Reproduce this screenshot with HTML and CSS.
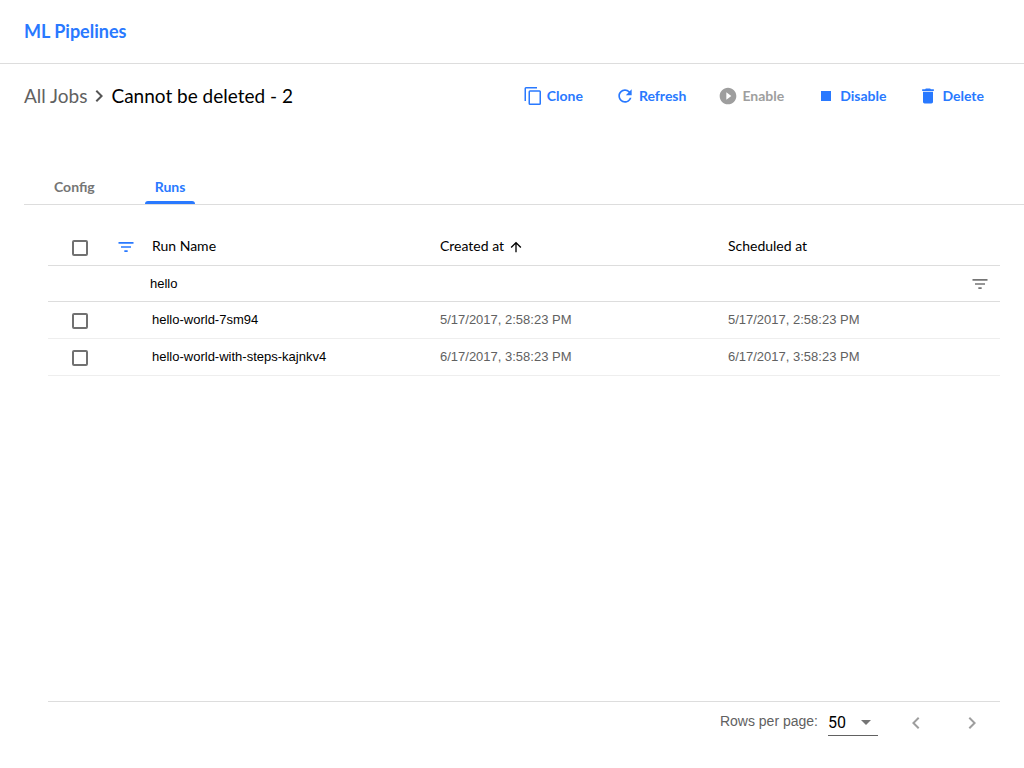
FILE: index.html
```html
<!DOCTYPE html>
<html lang="en">
<head>
<meta charset="utf-8">
<meta name="viewport" content="width=device-width, initial-scale=1">
<title>ML Pipelines</title>
<link rel="stylesheet" href="styles.css">
</head>
<body>
<header class="app-bar"><a class="brand" href="#">ML Pipelines</a></header>
<main class="page">
  <div class="toolbar">
    <nav class="breadcrumbs" aria-label="Breadcrumb">
      <a class="crumb-link" href="#">All Jobs</a>
      <svg class="icon crumb-icon" viewBox="0 0 24 24" aria-hidden="true"><path d="M10 6L8.59 7.41 13.17 12l-4.58 4.59L10 18l6-6z"/></svg>
      <h1 class="crumb-current">Cannot be deleted - 2</h1>
    </nav>
    <div class="actions">
      <button class="action" type="button">
        <svg class="icon" viewBox="0 0 20 20" aria-hidden="true"><path d="M14 1H3a1.5 1.5 0 0 0-1.500 1.500V15H3V2.500H14zM16.500 4.250H7A1.500 1.500 0 0 0 5.500 5.750V17.500A1.500 1.500 0 0 0 7 19h9.500A1.500 1.500 0 0 0 18 17.500V5.750a1.500 1.500 0 0 0-1.500-1.500zm0 13.250H7V5.750h9.500z"/></svg><span class="action-text">Clone</span></button>
      <button class="action" type="button">
        <svg class="icon" viewBox="0 0 24 24" aria-hidden="true"><path d="M17.650 6.350A7.958 7.958 0 0 0 12 4c-4.420 0-7.990 3.580-7.990 8s3.570 8 7.990 8c3.730 0 6.840-2.550 7.730-6h-2.080A5.990 5.990 0 0 1 12 18c-3.310 0-6-2.690-6-6s2.690-6 6-6c1.660 0 3.140.69 4.220 1.780L13 11h7V4z"/></svg><span class="action-text">Refresh</span></button>
      <button class="action" type="button" disabled>
        <svg class="icon" viewBox="0 0 24 24" aria-hidden="true"><path d="M12 2C6.480 2 2 6.480 2 12s4.480 10 10 10 10-4.480 10-10S17.520 2 12 2zm-2 14.500v-9l6 4.500z"/></svg><span class="action-text">Enable</span></button>
      <button class="action" type="button">
        <svg class="icon" viewBox="0 0 24 24" aria-hidden="true"><path d="M6 6h12v12H6z"/></svg><span class="action-text">Disable</span></button>
      <button class="action" type="button">
        <svg class="icon" viewBox="0 0 24 24" aria-hidden="true"><path d="M6 19c0 1.100.9 2 2 2h8c1.100 0 2-.9 2-2V7H6zM19 4h-3.500l-1-1h-5l-1 1H5v2h14z"/></svg><span class="action-text">Delete</span></button>
    </div>
  </div>
  <div class="tabs" role="tablist">
    <button class="tab" type="button" role="tab" aria-selected="false">Config</button>
    <button class="tab tab-active" type="button" role="tab" aria-selected="true">Runs</button>
  </div>
  <section class="runs">
    <table class="run-table">
      <colgroup><col class="col-check"><col class="col-filter"><col class="col-data"><col class="col-data"><col></colgroup>
      <thead>
        <tr>
          <td class="check-cell"><input class="checkbox" type="checkbox" aria-label="Select all runs"></td>
          <td><button class="filter-toggle" type="button" aria-label="Toggle filter"><svg class="icon" viewBox="0 0 24 24" aria-hidden="true"><path d="M10 18h4v-2h-4zM3 6v2h18V6zm3 7h12v-2H6z"/></svg></button></td>
          <th scope="col"><button class="sort" type="button">Run Name</button></th>
          <th scope="col" aria-sort="ascending"><button class="sort" type="button">Created at<svg class="icon sort-icon" viewBox="0 0 24 24" aria-hidden="true"><path d="M4 12l1.410 1.410L11 7.830V20h2V7.830l5.580 5.590L20 12l-8-8z"/></svg></button></th>
          <th scope="col"><button class="sort" type="button">Scheduled at</button></th>
        </tr>
        <tr class="filter-row">
          <td></td><td></td>
          <td colspan="3"><div class="filter-field"><input class="filter-input" type="text" value="hello" aria-label="Filter runs"><svg class="icon filter-icon" viewBox="0 0 24 24" aria-hidden="true"><path d="M10 18h4v-2h-4zM3 6v2h18V6zm3 7h12v-2H6z"/></svg></div></td>
        </tr>
      </thead>
      <tbody>
        <tr>
          <td class="check-cell"><input class="checkbox" type="checkbox" aria-label="Select hello-world-7sm94"></td><td></td>
          <td class="run-name">hello-world-7sm94</td><td>5/17/2017, 2:58:23 PM</td><td>5/17/2017, 2:58:23 PM</td>
        </tr>
        <tr>
          <td class="check-cell"><input class="checkbox" type="checkbox" aria-label="Select hello-world-with-steps-kajnkv4"></td><td></td>
          <td class="run-name">hello-world-with-steps-kajnkv4</td><td>6/17/2017, 3:58:23 PM</td><td>6/17/2017, 3:58:23 PM</td>
        </tr>
      </tbody>
    </table>
    <footer class="pager">
      <label class="pager-label" for="page-size">Rows per page:</label>
      <div class="select-wrap">
        <select class="page-size" id="page-size"><option>10</option><option>20</option><option selected>50</option><option>100</option></select>
        <svg class="icon select-icon" viewBox="0 0 24 24" aria-hidden="true"><path d="M7 10l5 5 5-5z"/></svg>
      </div>
      <button class="page-button" type="button" aria-label="Previous page" disabled><svg class="icon page-icon" viewBox="0 0 24 24" aria-hidden="true"><path d="M15.410 7.410L14 6l-6 6 6 6 1.410-1.410L10.830 12z"/></svg></button>
      <button class="page-button" type="button" aria-label="Next page" disabled><svg class="icon page-icon" viewBox="0 0 24 24" aria-hidden="true"><path d="M10 6L8.590 7.410 13.170 12l-4.580 4.590L10 18l6-6z"/></svg></button>
    </footer>
  </section>
</main>
</body>
</html>
```

FILE: styles.css
```css
* { box-sizing: border-box; }
body {
  margin: 0;
  min-height: 100vh;
  display: flex;
  flex-direction: column;
  background: #fff;
  color: #000;
  font-family: "Google Sans", Lato, sans-serif;
  font-size: 14px;
}
button, input, select { font: inherit; color: inherit; margin: 0; }
button { background: none; border: 0; padding: 0; }
.icon { display: block; flex: none; width: 20px; height: 20px; fill: currentColor; }

.app-bar {
  display: flex;
  align-items: center;
  height: 64px;
  padding: 0 24px 2px;
  border-bottom: 1px solid #ddd;
}
.brand { color: #2979ff; font-size: 18px; font-weight: 700; text-decoration: none; }

.page { flex: 1; display: flex; flex-direction: column; padding-left: 24px; }
.toolbar {
  display: flex;
  align-items: center;
  justify-content: space-between;
  height: 64px;
  padding-right: 40px;
}
.breadcrumbs { display: flex; align-items: center; font-size: 19px; white-space: nowrap; }
.crumb-link { padding-bottom: 2px; color: #616161; text-decoration: none; }
.crumb-icon { width: 24px; height: 24px; color: #555; }
.crumb-current { margin: 0; padding-bottom: 2px; font-size: 19px; font-weight: 400; }
.actions { display: flex; gap: 32px; }
.action { display: flex; align-items: center; gap: 4px; color: #2979ff; font-weight: 700; }
.action-text { padding-bottom: 2px; }
.action:disabled { color: #9e9e9e; }

.tabs { display: flex; gap: 40px; margin-top: 40px; padding-left: 20px; border-bottom: 1px solid #ddd; }
.tab { position: relative; height: 36px; padding: 0 10px; color: #757575; font-weight: 700; }
.tab-active { color: #2979ff; }
.tab-active::after {
  content: "";
  position: absolute;
  left: 0;
  right: 0;
  bottom: 0;
  height: 3px;
  border-radius: 3px 3px 0 0;
  background: currentColor;
}

.runs { flex: 1; display: flex; flex-direction: column; padding: 24px; }
.run-table {
  width: 100%;
  table-layout: fixed;
  border-collapse: separate;
  border-spacing: 0;
  color: #616161;
  font-family: "Liberation Sans", Arial, sans-serif;
  font-size: 13px;
}
.run-table td, .run-table th { height: 37px; padding: 0; text-align: left; border-bottom: 1px solid #eee; }
.run-table tbody td { padding-bottom: 2px; }
.run-table thead td, .run-table thead th { border-bottom-color: #ddd; }
.run-table thead th { padding-bottom: 4px; }
.run-table .filter-row td { height: 36px; }
.col-check { width: 64px; }
.col-filter { width: 40px; }
.col-data { width: 30.25%; }
.run-table .check-cell { padding: 2px 0 0 24px; }
.run-table .run-name { color: #000; }
.checkbox {
  display: block;
  appearance: none;
  width: 16px;
  height: 16px;
  border: 2px solid #717171;
  border-radius: 2px;
  background: #fff;
}
.checkbox:checked { background: #2979ff; border-color: #2979ff; }
.filter-toggle { display: block; padding-left: 4px; color: #2979ff; }
.sort {
  display: flex;
  align-items: center;
  gap: 4px;
  color: #000;
  font-family: "Google Sans", Lato, sans-serif;
  font-size: 14px;
  font-weight: 400;
}
.sort-icon { width: 16px; height: 16px; margin-top: 4px; }
.filter-field { display: flex; align-items: center; padding-right: 10px; }
.filter-input { flex: 1; min-width: 0; padding: 0; margin-left: -2px; border: 0; outline: 0; color: #000; background: none; }
.filter-icon { color: #757575; }

.pager {
  display: flex;
  align-items: center;
  justify-content: flex-end;
  margin-top: auto;
  height: 43px;
  border-top: 1px solid #ddd;
  color: #616161;
  font-family: "Liberation Sans", Arial, sans-serif;
}
.pager-label { margin-right: 10px; padding-bottom: 4px; }
.select-wrap { position: relative; margin-right: 14px; padding-bottom: 2px; }
.page-size {
  display: block;
  appearance: none;
  width: 50px;
  height: 28px;
  padding: 2px 0 0;
  border: 0;
  border-bottom: 1px solid #616161;
  border-radius: 0;
  background: none;
  color: #000;
  font-family: Roboto, sans-serif;
  font-size: 16px;
}
.select-icon { position: absolute; right: 0; top: 2px; width: 24px; height: 24px; color: #757575; pointer-events: none; }
.page-button { display: flex; align-items: center; justify-content: center; width: 48px; height: 42px; margin-right: 8px; color: #9e9e9e; }
.page-button:last-child { margin-right: 4px; }
.page-icon { width: 24px; height: 24px; }
```
